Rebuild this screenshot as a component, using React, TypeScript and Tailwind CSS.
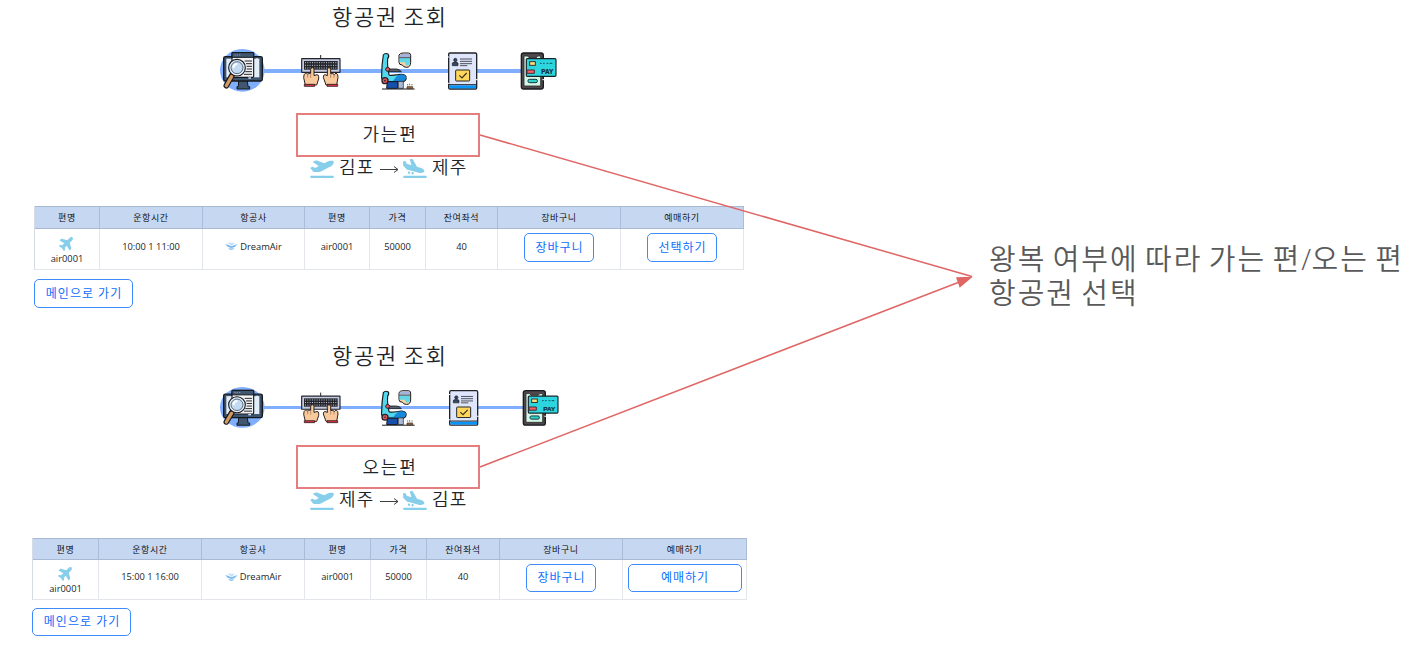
import React from "react";
import { FaPlane, FaPlaneArrival, FaPlaneDeparture } from "react-icons/fa6";

function SearchIcon({ className }: { className: string }) {
  return (
    <svg className={className} viewBox="27 18 144 144" preserveAspectRatio="none">
      <ellipse cx="97" cy="91" rx="67" ry="64" fill="#80aeff" />
      <path d="M86 122h26l2 18h5v7H81v-7h4z" fill="#41566f" stroke="#15191f" strokeWidth="3" />
      <rect x="41" y="50" width="116" height="73" rx="5" fill="#3d546e" stroke="#15191f" strokeWidth="4" />
      <rect x="49" y="56" width="99" height="56" fill="#e4eef9" />
      <rect x="66" y="38" width="65" height="74" rx="3" fill="#f2f2f4" stroke="#15191f" strokeWidth="3.5" />
      <path d="M66 38h65v14H66z" fill="#41566f" stroke="#15191f" strokeWidth="3" />
      <path d="M73 45h4m3 0h4m3 0h4" stroke="#aabbd0" strokeWidth="2" />
      <path d="M104 63h22M108 71h18M110 79h16M110 87h16M106 95h20M102 103h24" stroke="#25282d" strokeWidth="3" />
      <path d="M66 106l-17 31" stroke="#15191f" strokeWidth="17" strokeLinecap="round" />
      <path d="M65 109l-16 28" stroke="#d69a5d" strokeWidth="10" strokeLinecap="round" />
      <circle cx="81" cy="83" r="25" fill="#e8f2fc" stroke="#15191f" strokeWidth="3.5" />
      <circle cx="81" cy="83" r="18" fill="#c3daf3" stroke="#3d4d63" strokeWidth="2.5" />
      <path d="M70 84q1-12 12-13" fill="none" stroke="#fff" strokeWidth="6" />
      <circle cx="141" cy="56" r="2" fill="#fff" />
      <path d="M115 114h8" stroke="#e6edf5" strokeWidth="4" />
    </svg>
  );
}

function KeyboardIcon({ className }: { className: string }) {
  return (
    <svg className={className} viewBox="270 18 126 144" preserveAspectRatio="none">
      <path d="M332 45v12" stroke="#222" strokeWidth="3" />
      <rect x="275" y="56" width="115" height="41" rx="1" fill="#c5cbe0" stroke="#23252b" strokeWidth="3.5" />
      <rect x="282" y="63" width="101" height="26" fill="#24262c" />
      <path d="M285 68h95M285 76h95M285 84h95" stroke="#c3c9db" strokeWidth="3" strokeDasharray="3 4" />
      <path d="M302 88q0-5 5-5t5 5v19l9-3q5 0 5 6v7l-6 18H286l-5-22q-1-10 7-15l5 5q1-5 9-3z" fill="#f8c99b" stroke="#29201d" strokeWidth="3" />
      <path d="M362 88q0-5-5-5t-5 5v19l-7-3q-6 1-5 8l8 23h32l4-23q1-9-6-13l-5 5q-3-5-11-3z" fill="#f8c99b" stroke="#29201d" strokeWidth="3" />
      <path d="M293 102v11m9-12v13m70-13v12m-10-11v12" stroke="#745040" strokeWidth="1.5" />
      <path d="M283 133h31v6h-31zM351 133h32v6h-32z" fill="#ed304d" stroke="#29201d" strokeWidth="2.5" />
    </svg>
  );
}

function SeatIcon({ className }: { className: string }) {
  return (
    <svg className={className} viewBox="60 18 108 144" preserveAspectRatio="none">
      <path d="M70 45q5-7 14-3 5 6-1 14-2 20 4 48 0 4 27 0 19-4 24 6 2 12-9 15H80q-18-2-15-20 0-30 5-60z" fill="#50d9ec" stroke="#16191d" strokeWidth="3.5" />
      <path d="M114 105q18-5 24 5-2 12-10 14H98q10-14 16-19z" fill="#1689db" />
      <path d="M82 125h31v20H80z" fill="#164fac" stroke="#16191d" strokeWidth="3" />
      <path d="M115 124h15v21h-15z" fill="#abb9d8" stroke="#16191d" strokeWidth="2" />
      <path d="M66 147h98" stroke="#16191d" strokeWidth="3" />
      <path d="M84 87h26q7 0 14 8H84z" fill="#56616d" stroke="#16191d" strokeWidth="2.5" />
      <circle cx="83" cy="88" r="6" fill="#ef5360" stroke="#282126" strokeWidth="3" />
      <circle cx="75" cy="122" r="9" fill="#dc5961" stroke="#282126" strokeWidth="4" />
      <circle cx="75" cy="122" r="2.5" fill="#282126" />
      <path d="M117 45q3-6 12-6h16q7 0 7 7v22q-1 14-12 14-10 0-13-7-10 0-10-8z" fill="#f8d2a6" stroke="#16191d" strokeWidth="3" />
      <path d="M119 46q3-5 10-5h15q6 0 6 5v6h-31z" fill="#a3b3dc" />
      <path d="M119 54h31v15q-3 8-11 8l-5-10h-15z" fill="#63d7e6" />
      <path d="M118 53h32" stroke="#333f4c" strokeWidth="2.5" />
      <path d="M141 140h17v6h-17z" fill="#a06b3f" stroke="#33251b" strokeWidth="2" />
      <path d="M143 132v4m6-5v5m7-4v4" stroke="#5d5348" strokeWidth="2.5" />
    </svg>
  );
}

function TicketIcon({ className }: { className: string }) {
  return (
    <svg className={className} viewBox="258 18 102 144" preserveAspectRatio="none">
      <rect x="266" y="39" width="84" height="108" rx="4" fill="#dfe6fb" stroke="#202328" strokeWidth="4" />
      <path d="M268 136h80v9h-80z" fill="#0695fa" />
      <path d="M267 134h82" stroke="#202328" strokeWidth="3" />
      <circle cx="286" cy="60" r="5" fill="#34455c" stroke="#202328" strokeWidth="2" />
      <path d="M277 77v-8q9-7 17 0v8z" fill="#34455c" stroke="#202328" strokeWidth="2" />
      <path d="M300 57h36M300 64h36M300 71h36M300 77h22" stroke="#303338" strokeWidth="2.5" />
      <rect x="287" y="90" width="42" height="33" rx="2" fill="#ffd65a" stroke="#202328" strokeWidth="3" />
      <path d="M298 106l8 8 14-15" fill="none" stroke="#333027" strokeWidth="3.5" />
      <path d="M263 51h5M348 119h5M263 130h5" stroke="#fff" strokeWidth="3" />
    </svg>
  );
}

function PayIcon({ className }: { className: string }) {
  return (
    <svg className={className} viewBox="477 18 120 144" preserveAspectRatio="none">
      <rect x="484" y="39" width="66" height="108" rx="7" fill="#51474b" stroke="#191c20" strokeWidth="4" />
      <path d="M492 48h11l4 5h22l4-5h9v90h-50z" fill="#d6f7e7" stroke="#292b2d" strokeWidth="2.5" />
      <rect x="499" y="56" width="89" height="53" rx="3" fill="#2dd6df" stroke="#15252a" strokeWidth="3.5" />
      <rect x="509" y="65" width="17" height="11" fill="#ffe27b" stroke="#35302a" strokeWidth="3" />
      <path d="M501 90h22v10h-22z" fill="#f46069" stroke="#443034" strokeWidth="3" />
      <path d="M540 70h5m4 0h5m6 0h5m4 0h8" stroke="#16535b" strokeWidth="3" />
      <rect x="504" y="118" width="28" height="10" rx="4" fill="#32d2cc" stroke="#16373b" strokeWidth="3" />
      <text x="544" y="102" fontSize="19" fontWeight="700" fontFamily="Liberation Sans, sans-serif" fill="#102b33" stroke="#102b33" strokeWidth="0.6">PAY</text>
      <path d="M547 119h6" stroke="#fff" strokeWidth="3" />
    </svg>
  );
}

function DreamAirLogo() {
  return (
    <svg className="h-[9px] w-[13px] shrink-0" viewBox="0 0 39 27">
      <path d="M1 6q10 2 18 7L38 6q-5 9-18 12Q6 16 1 6z" fill="#7db9ee" />
      <path d="M7 3q12-3 24 1l-12 8z" fill="#cbe4fa" />
      <path d="M9 17q9 4 20 0-4 6-10 8-7-2-10-8z" fill="#9acbf5" />
    </svg>
  );
}

type TripProps = {
  direction: string;
  from: string;
  to: string;
  time: string;
  action: string;
  returning?: boolean;
};

const headings = ["편명", "운항시간", "항공사", "편명", "가격", "잔여좌석", "장바구니", "예매하기"];

function Trip({ direction, from, to, time, action, returning = false }: TripProps) {
  const iconHeight = returning ? "h-[46px]" : "h-12";
  const button = `flex items-center justify-center rounded-[5px] border border-[#3d8bfd] bg-white pl-px text-[12px] leading-none tracking-[1px] text-[#0d6efd] ${
    returning ? "h-7" : "h-[29px]"
  }`;
  const columns = returning
    ? "grid-cols-[66px_103px_103px_66px_56px_73px_123px_124px]"
    : "grid-cols-[65px_103px_102px_65px_56px_72px_123px_123px]";
  const line = "border-r border-[#e3e6ea]";
  const cell = `flex items-center justify-center ${line}`;

  return (
    <section className={returning ? "h-[313px]" : "h-[339px]"}>
      <h1 className="flex h-[34px] items-center pb-[2px] pl-[332px] text-[22px] leading-none font-[350] tracking-[1.8px] [word-spacing:-2px] text-[#212529]">항공권 조회</h1>
      <div className={returning ? "relative mt-[11px] flex pl-[219px]" : "relative mt-3 flex pl-[219px]"}>
        <div className={returning ? "absolute top-[22px] left-[262px] h-[3px] w-[262px] bg-[#80aeff]" : "absolute top-[23px] left-[263px] h-[4px] w-[260px] bg-[#80aeff]"} />
        <SearchIcon className={`relative w-12 ${iconHeight}`} />
        <KeyboardIcon className={`relative ml-[33px] w-[42px] ${iconHeight}`} />
        <SeatIcon className={`relative ml-[38px] w-9 ${iconHeight}`} />
        <TicketIcon className={`relative w-[34px] ${iconHeight} ${returning ? "ml-[31px]" : "ml-[30px]"}`} />
        <PayIcon className={`relative w-10 ${iconHeight} ${returning ? "ml-10" : "ml-[39px]"}`} />
      </div>
      <div className={`ml-[296px] flex h-[44px] w-[184px] items-center justify-center border-2 border-[#e57f7f] pl-[4px] text-[18px] leading-none font-[350] tracking-[1.8px] text-[#212529] ${returning ? "mt-[15px]" : "mt-[19px] pb-[2px]"}`}>
        {direction}
      </div>
      <div className="flex h-[22px] items-center pl-[310px] text-[18px] leading-none font-[350] tracking-[1.3px] text-[#212529]">
        <FaPlaneDeparture className="h-[19px] w-6 text-[#87ceeb]" />
        <span className="ml-[5px] w-[41px] pb-[2px]">{from}</span>
        <svg className="mt-[3px] h-[9px] w-[19px]" viewBox="0 0 19 9" fill="none" stroke="#3c4043">
          <path d="M0 4.5h18M14 1.5l4 3-4 3" />
        </svg>
        <FaPlaneArrival className="ml-[4px] h-[19px] w-6 text-[#87ceeb]" />
        <span className="ml-[5px] pb-[2px]">{to}</span>
      </div>
      <div className={`mt-[27px] w-max border-l border-[#d5dbe4] text-[9.3px] text-[#212529] ${returning ? "ml-8" : "ml-[34px]"}`}>
        <div className={`grid border-y border-[#a9b9d3] bg-[#c6d7f2] ${columns} ${returning ? "h-[22px]" : "h-[23px]"}`}>
          {headings.map((heading, index) => (
            <div key={index} className="flex items-center justify-center border-r border-[#abbcd8] text-[9px] leading-none font-[350] tracking-[0.6px] text-black">
              {heading}
            </div>
          ))}
        </div>
        <div className={`grid border-b border-[#e3e6ea] ${columns} ${returning ? "h-10" : "h-[41px]"}`}>
          <div className={`flex flex-col items-center ${line} ${returning ? "pt-[5px]" : "pt-[6px]"}`}>
            <FaPlane className="h-[16px] w-[16px] -rotate-45 text-[#87ceeb]" />
            <span className="mt-[3px] leading-[10px]">air0001</span>
          </div>
          <div className={`pb-[5px] ${cell}`}>{time}</div>
          <div className={`gap-[2px] pb-[5px] ${cell}`}>
            <DreamAirLogo />
            <span>DreamAir</span>
          </div>
          <div className={`pb-[5px] ${cell}`}>air0001</div>
          <div className={`pb-[5px] ${cell}`}>50000</div>
          <div className={`pb-[5px] ${cell}`}>40</div>
          <div className={`pb-[3px] ${cell}`}>
            <button className={`w-[70px] ${button}`}>장바구니</button>
          </div>
          <div className={`pb-[3px] ${cell}`}>
            <button className={`${button} ${returning ? "w-[114px]" : "w-[70px]"}`}>{action}</button>
          </div>
        </div>
      </div>
      <button className={`w-[99px] ${button} ${returning ? "mt-2 ml-8" : "mt-[9px] ml-[34px]"}`}>메인으로 가기</button>
    </section>
  );
}

export default function App() {
  return (
    <main className="relative flex h-[652px] w-[1427px] overflow-hidden bg-white font-['Open_Sans','Noto_Sans_CJK_KR',sans-serif]">
      <div className="w-[760px] shrink-0">
        <Trip direction="가는편" from="김포" to="제주" time="10:00 1 11:00" action="선택하기" />
        <Trip direction="오는편" from="제주" to="김포" time="15:00 1 16:00" action="예매하기" returning />
      </div>
      <div className="mt-[242px] ml-[229px] text-[29px] leading-[34px] font-[350] tracking-[2px] [word-spacing:-3.2px] whitespace-nowrap text-[#595959]">
        <p>왕복 여부에 따라 가는 편<span className="tracking-[0.5px]">/</span>오는 편</p>
        <p>항공권 선택</p>
      </div>
      <svg className="pointer-events-none absolute inset-0 h-full w-full" viewBox="0 0 1427 652" fill="none">
        <path d="M480 135L972 276.5M480 467L962 281" stroke="#e06666" strokeWidth="1.5" />
        <path d="M972.7 276.7L956 277.3l3.7 10.4z" fill="#e06666" />
      </svg>
    </main>
  );
}
